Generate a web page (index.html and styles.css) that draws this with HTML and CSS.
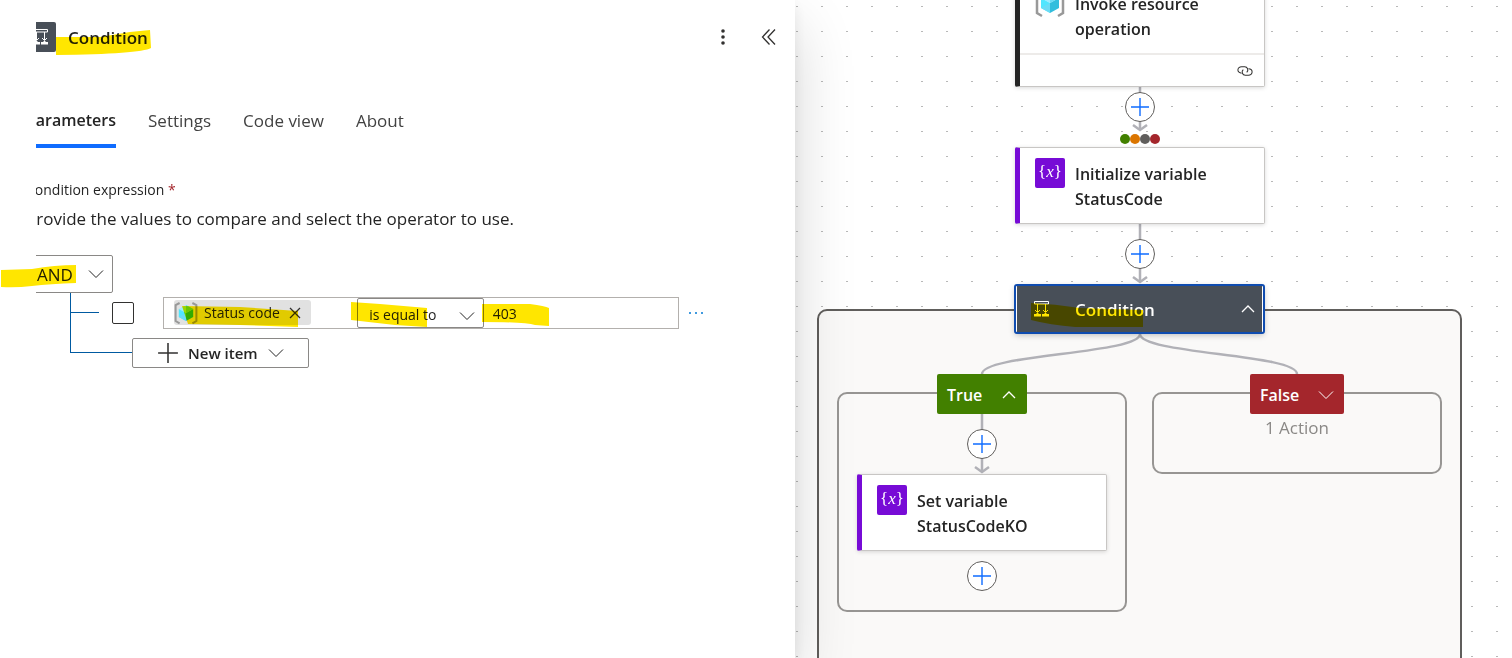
FILE: index.html
```html
<!DOCTYPE html>
<html lang="en">
<head>
<meta charset="utf-8">
<title>Condition</title>
<link rel="stylesheet" href="styles.css">
</head>
<body>
<svg class="defs" aria-hidden="true">
  <symbol id="scale" viewBox="0 0 30 30"><path d="M7.500 7.500h14v2.500h-14zM10.500 10v8M18.500 10v8" fill="none" stroke="#fff"/><path d="M8 16l2.500 2.500 2.500-2.500M16 16l2.500 2.500 2.500-2.500" fill="none" stroke="#fff"/><path d="M7 20h2l1-1h1l1 1h2v2.500h-7zM15 20h2l1-1h1l1 1h2v2.500h-7z" fill="#fff"/></symbol>
  <symbol id="cube" viewBox="0 0 30 30"><path d="M7 2.500L2 5v20l5 3M23 2.500L28 5v20l-5 3" fill="none" stroke="#999" stroke-width="2.500"/><path d="M15 5l9 5-9 5-9-5z" fill="#9cebff"/><path d="M6 10l9 5v10l-9-5z" fill="#50e6ff"/><path d="M24 10l-9 5v10l9-5z" fill="#32bedd"/><path d="M6 20l9-5v10zM15 5l9 5-9 5z" fill="#6adcf5"/></symbol>
  <symbol id="down" viewBox="0 0 16 16"><path d="M1 4.500l7 7 7-7" fill="none" stroke="currentColor"/></symbol>
  <symbol id="up" viewBox="0 0 16 16"><path d="M2 11l6-6 6 6" fill="none" stroke="currentColor" stroke-width="1.300"/></symbol>
  <symbol id="plus" viewBox="0 0 20 20"><path d="M10 1v18M1 10h18" fill="none" stroke="currentColor" stroke-width="1.400"/></symbol>
</svg>
<div class="app">
  <section class="panel">
    <div class="clip">
      <div class="content">
        <header class="head">
          <span class="tile"><svg><use href="#scale"/></svg></span>
          <h1>Condition</h1>
          <button class="bare" aria-label="More options"><svg width="20" height="20"><g fill="#323130"><circle cx="10" cy="4" r="1.800"/><circle cx="10" cy="10" r="1.800"/><circle cx="10" cy="16" r="1.800"/></g></svg></button>
          <button class="bare" aria-label="Collapse panel"><svg width="20" height="20"><path d="M10.500 2.500L3.500 10l7 7.500M16 2.500L9 10l7 7.500" fill="none" stroke="#323130" stroke-width="1.300"/></svg></button>
        </header>
        <nav class="tabs">
          <button class="tab on">Parameters</button>
          <button class="tab">Settings</button>
          <button class="tab">Code view</button>
          <button class="tab">About</button>
        </nav>
        <p class="label">Condition expression <span class="req">*</span></p>
        <p class="hint">Provide the values to compare and select the operator to use.</p>
        <div class="pick and">
          <select aria-label="Group operator"><option>AND</option><option>OR</option></select>
          <svg class="chev"><use href="#down"/></svg>
        </div>
        <div class="tree">
          <div class="row">
            <input type="checkbox" class="check" aria-label="Select row">
            <div class="fields">
              <div class="value">
                <span class="token"><svg class="cube"><use href="#cube"/></svg>Status code<button class="bare" aria-label="Remove Status code"><svg width="12" height="12"><path d="M1 1l10 10M11 1L1 11" stroke="#323130" stroke-width="1.300"/></svg></button></span>
              </div>
              <div class="pick oper">
                <select aria-label="Operator"><option>is equal to</option></select>
                <svg class="chev"><use href="#down"/></svg>
              </div>
              <input class="value text" aria-label="Value" value="403">
            </div>
            <button class="bare" aria-label="Row options"><svg width="18" height="6"><g fill="#0078d4"><circle cx="3" cy="3" r="1"/><circle cx="9" cy="3" r="1"/><circle cx="15" cy="3" r="1"/></g></svg></button>
          </div>
          <button class="new"><svg class="plus"><use href="#plus"/></svg>New item<svg class="chev"><use href="#down"/></svg></button>
        </div>
      </div>
    </div>
    <svg class="marks" aria-hidden="true">
      <path d="M56 37L100 37 130 32 150 30 151 48Q140 54 56 55z"/>
      <path d="M1 270L32 269Q55 265 76 265V283Q50 284 32 286 16 288 1 287z"/>
      <path d="M182 306L240 307 298 311V327L240 325 188 324z"/>
      <path d="M351 302L380 304 427 308V327L395 325 351 320z"/>
      <path d="M482 304L530 304Q545 306 549 308V326L535 325Q525 322 482 322z"/>
    </svg>
  </section>

  <main class="canvas">
    <div class="scope"></div>
    <div class="group yes"></div>
    <div class="group no"></div>
    <svg class="edges" aria-hidden="true">
      <path d="M345 87v42M345 223v59M345 334C345 354 187 354 187 374M345 334C345 354 502 354 502 374M187 414v58"/>
      <path d="M338 125l7 5 7-5M338 277l7 5 7-5M180 467l7 5 7-5"/>
    </svg>
    <article class="card invoke">
      <div class="body"><svg class="icon"><use href="#cube"/></svg><h2>Invoke resource operation</h2></div>
      <div class="foot"><svg width="16" height="12" viewBox="0 0 18 14" fill="none" stroke="#323130" stroke-width="1.200"><path d="M5 9.500A4 3.500 0 0 1 5 2h3.500a3.700 3.700 0 0 1 2.500 6.500"/><path d="M13 4.500a4 3.500 0 0 1 0 7.500H9.500A3.700 3.700 0 0 1 7 5.500"/></svg></div>
    </article>
    <button class="add a1" aria-label="Add action"><svg><use href="#plus"/></svg></button>
    <div class="dots"><i class="ok"></i><i class="skip"></i><i class="time"></i><i class="fail"></i></div>
    <article class="card var init">
      <div class="body"><svg class="icon" viewBox="0 0 30 30"><rect width="30" height="30" rx="2" fill="#770bd6"/><text class="fx" x="15" y="19">{<tspan class="x">x</tspan>}</text></svg><h2>Initialize variable StatusCode</h2></div>
    </article>
    <button class="add a2" aria-label="Add action"><svg><use href="#plus"/></svg></button>
    <article class="cond"><svg class="icon"><use href="#scale"/></svg><h2>Condition</h2><button class="bare" aria-label="Collapse"><svg class="chev"><use href="#up"/></svg></button></article>
    <button class="branch true">True<svg class="chev"><use href="#up"/></svg></button>
    <button class="branch false">False<svg class="chev"><use href="#down"/></svg></button>
    <p class="count">1 Action</p>
    <button class="add a3" aria-label="Add action"><svg><use href="#plus"/></svg></button>
    <article class="card var set">
      <div class="body"><svg class="icon" viewBox="0 0 30 30"><rect width="30" height="30" rx="2" fill="#770bd6"/><text class="fx" x="15" y="19">{<tspan class="x">x</tspan>}</text></svg><h2>Set variable StatusCodeKO</h2></div>
    </article>
    <button class="add a4" aria-label="Add action"><svg><use href="#plus"/></svg></button>
    <svg class="marks" aria-hidden="true"><path d="M236 303Q260 304 285 308L348 310V327H280Q255 325 236 320z"/></svg>
  </main>
</div>
</body>
</html>
```
FILE: styles.css
```css
* { box-sizing: border-box; }
body { margin: 0; font-family: "Open Sans", "Noto Sans", sans-serif; font-size: 17px; color: #242424; }
h1, h2, p { margin: 0; font-size: inherit; }
button, select, input { font: inherit; color: inherit; margin: 0; }
svg { display: block; flex: none; }
.defs { position: absolute; width: 0; height: 0; }
.app { display: grid; grid-template-columns: minmax(0, 795fr) minmax(0, 717fr); height: 100vh; overflow: hidden; }
.bare { border: 0; padding: 0; background: none; }
.chev { width: 16px; height: 16px; }
.marks { position: absolute; left: 0; top: 0; width: 100%; height: 100%; fill: #ffe600; mix-blend-mode: multiply; pointer-events: none; }

/* Settings panel */
.panel { position: relative; z-index: 1; background: #fff; box-shadow: 0 26px 58px rgba(0, 0, 0, .16), 0 5px 14px rgba(0, 0, 0, .08); }
.clip { height: 100%; margin-left: 36px; overflow: hidden; }
.content { margin-left: -10px; padding-top: 22px; }
.head { display: flex; align-items: center; height: 30px; padding-right: 16px; gap: 26px; }
.tile { width: 30px; height: 30px; border-radius: 2px; background: #484f58; }
.tile svg { width: 30px; height: 30px; }
.head h1 { flex: 1; margin-left: -14px; font-weight: 600; }
.tabs { display: flex; gap: 32px; margin-top: 54px; }
.tab { height: 42px; padding: 0 0 10px; border: 0; border-bottom: 4px solid transparent; background: none; color: #424242; }
.tab.on { font-size: 16px; font-weight: 600; color: #242424; border-color: #0f6cff; }
.label { margin-top: 31px; font-size: 14px; line-height: 22px; }
.req { color: #a4262c; }
.hint { margin-top: 4px; line-height: 28px; white-space: nowrap; }
.pick { position: relative; }
.pick select { width: 100%; height: 100%; appearance: none; border: 1px solid #8a8886; border-radius: 2px; background: #fff; outline: 0; }
.pick .chev { position: absolute; right: 9px; top: 50%; margin-top: -8px; pointer-events: none; }
.and { width: 87px; height: 38px; margin-top: 22px; }
.and select { padding: 0 0 0 10px; }
.tree { display: flex; flex-direction: column; align-items: flex-start; margin-left: 44px; padding-top: 4px; background: linear-gradient(#005aa1, #005aa1) 0 0 / 1px 60px no-repeat, linear-gradient(#005aa1, #005aa1) 0 19px / 29px 1px no-repeat, linear-gradient(#005aa1, #005aa1) 0 59px / 62px 1px no-repeat; }
.row { display: flex; align-items: center; align-self: stretch; padding: 0 90px 0 42px; }
.check { appearance: none; width: 22px; height: 22px; margin-right: 29px; border: 1px solid #323130; border-radius: 2px; flex: none; }
.fields { flex: 1; display: grid; grid-template: 100% / 194fr 127fr 195fr; height: 32px; margin-right: 8px; border: 1px solid #b3b0ad; font-size: 14px; }
.value { padding: 2px 10px; min-width: 0; }
.text { border: 0; padding: 0 9px; background: none; outline: 0; }
.token { display: inline-flex; align-items: center; height: 25px; padding-right: 10px; border-radius: 3px; background: #e1e1e1; }
.token .cube { width: 24px; height: 24px; margin-right: 6px; }
.token .bare { margin-left: 9px; }
.oper select { padding: 2px 11px 0; }
.oper .chev { margin-top: -5px; }
.new { display: flex; align-items: center; height: 30px; margin: 9px 0 0 62px; padding: 0 24px; border: 1px solid #8a8886; border-radius: 2px; background: #fff; font-size: 15px; font-weight: 600; }
.plus { width: 22px; height: 22px; margin-right: 9px; color: #323130; }
.new .chev { margin-left: 10px; }

/* Designer canvas */
.canvas { position: relative; overflow: hidden; background: conic-gradient(from 90deg at 23px 24px, #b8b8b8 90deg, #fff 0) -22px -18px / 25px 25px; }
.scope, .group, .card, .cond, .add, .branch, .dots, .count, .edges { position: absolute; }
.edges { left: 0; top: 0; width: 100%; height: 100%; fill: none; stroke: #b1b1b7; stroke-width: 2.500; }
.scope { left: 22px; top: 309px; width: 645px; height: 400px; border: 2px solid #605e5c; border-radius: 10px; background: #faf9f8; }
.group { width: 290px; border: 2px solid #979593; border-radius: 10px; top: 392px; }
.yes { left: 42px; height: 220px; }
.no { left: 357px; height: 82px; }
.card { width: 250px; border: 1px solid #c8c6c4; border-left: 5px solid #242424; border-radius: 2px; background: #fff; box-shadow: 0 1px 4px rgba(0, 0, 0, .15); }
.card.var { border-left-color: #770bd6; }
.card h2, .cond h2 { flex: 1; font-size: 16px; font-weight: 600; line-height: 25px; }
.body { display: flex; gap: 10px; height: 75px; padding: 10px 30px 0 15px; }
.body h2 { margin-top: 4px; }
.icon { width: 30px; height: 30px; }
.fx { fill: #fff; font: 17px "Liberation Serif", serif; text-anchor: middle; }
.x { font-style: italic; }
.foot { display: flex; align-items: center; justify-content: flex-end; height: 33px; padding-right: 11px; border-top: 2px solid #edebe9; }
.invoke { left: 220px; top: -23px; }
.init { left: 220px; top: 147px; }
.set { left: 62px; top: 474px; }
.add { display: grid; place-items: center; width: 30px; height: 30px; padding: 0; border: 1px solid #605e5c; border-radius: 50%; background: #fff; color: #0f6cff; }
.add svg { width: 20px; height: 20px; }
.a1 { left: 330px; top: 92px; }
.a2 { left: 330px; top: 239px; }
.a3 { left: 172px; top: 429px; }
.a4 { left: 172px; top: 561px; }
.dots { display: flex; left: 325px; top: 134px; }
.dots i { width: 10px; height: 10px; border-radius: 50%; }
.ok { background: #428000; }
.skip { background: #db7500; }
.time { background: #605e5c; }
.fail { background: #a4262c; }
.cond { display: flex; align-items: center; gap: 18px; left: 220px; top: 285px; width: 249px; height: 48px; padding: 0 6px 0 10px; border: 2px solid #fff; border-width: 1px 2px; outline: 2px solid #0f4cb0; outline-offset: -1px; border-radius: 2px; background: #484f58; color: #fff; box-shadow: 0 2px 6px rgba(0, 0, 0, .25); }
.cond h2 { font-size: 17px; }
.branch { display: flex; align-items: center; justify-content: space-between; top: 374px; height: 40px; padding: 2px 10px 0; border: 0; border-radius: 2px; color: #fff; font-size: 16px; font-weight: 600; }
.true { left: 142px; width: 90px; background: #428000; }
.false { left: 455px; width: 94px; background: #a4262c; }
.count { left: 357px; width: 290px; top: 415px; line-height: 25px; text-align: center; color: #8a8886; }
```
